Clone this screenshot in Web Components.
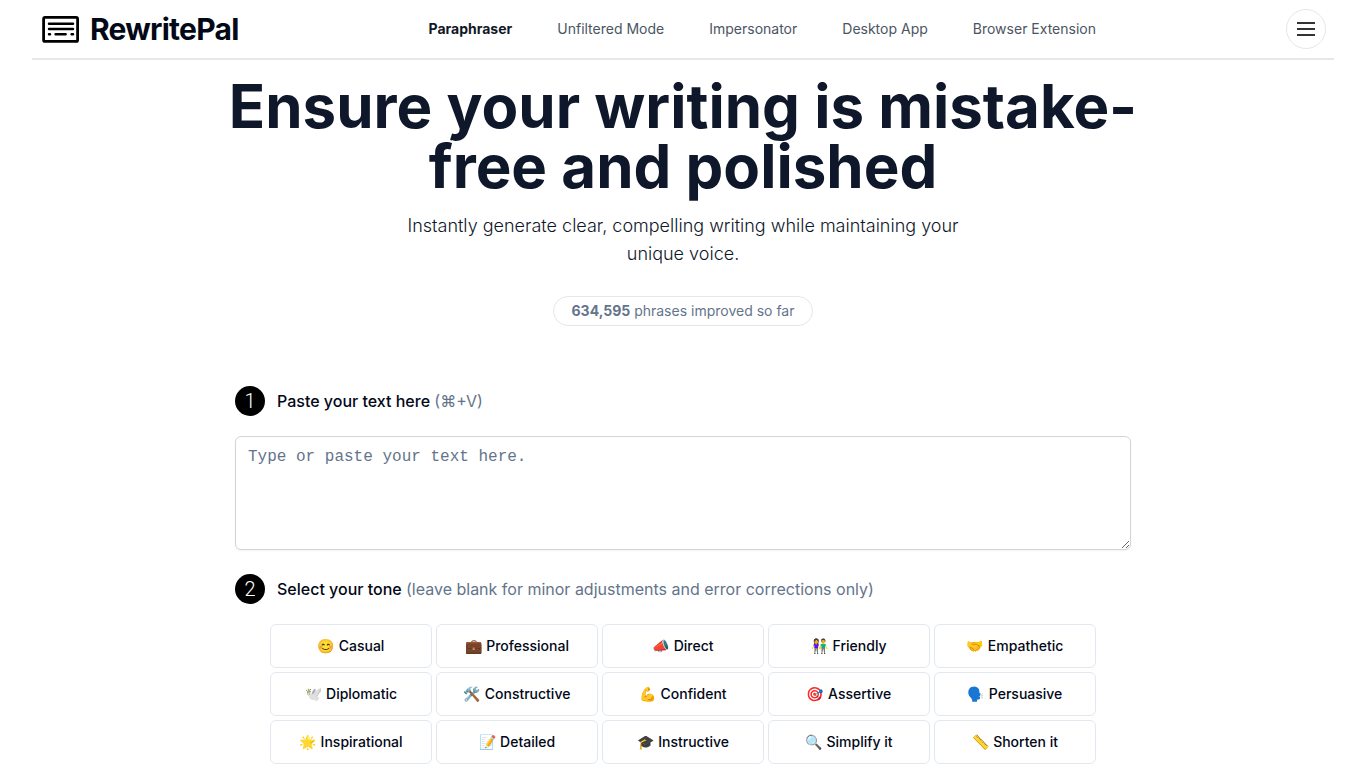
<!DOCTYPE html>
<html lang="en">
<head>
<meta charset="utf-8">
<meta name="viewport" content="width=device-width, initial-scale=1">
<title>RewritePal</title>
<style>
  body { margin: 0; background: #fff; color: #020817; font-family: Inter, "Noto Color Emoji", sans-serif; }
</style>
</head>
<body>
<rp-app></rp-app>
<script>
const define = (name, markup, setup) => {
  const template = document.createElement('template');
  template.innerHTML = markup;
  customElements.define(name, class extends HTMLElement {
    connectedCallback() {
      if (this.shadowRoot) return;
      this.attachShadow({ mode: 'open' }).append(template.content.cloneNode(true));
      if (setup) setup(this, this.shadowRoot);
    }
  });
};

define('rp-logo', `
  <style>
    :host { display: block; }
    a { display: flex; align-items: center; gap: 10px; color: inherit; text-decoration: none; font-size: 30px; line-height: 36px; font-weight: 700; letter-spacing: -0.025em; }
    svg { display: block; }
  </style>
  <a href="#">
    <svg width="40" height="30" viewBox="0 0 40 30" fill="none" stroke="#000" stroke-linecap="round" aria-hidden="true">
      <rect x="3.6" y="3.4" width="34" height="24" rx="1.5" stroke-width="2.8"/>
      <path d="M9 9.7h24M9 14.9h24M9 20.3h1M15.6 20.3h10M31.6 20.3h1.4" stroke-width="2.5"/>
    </svg>
    <span><slot></slot></span>
  </a>`);

define('rp-nav-link', `
  <style>
    :host { display: block; font-size: 14px; line-height: 20px; }
    a { color: #4b5563; text-decoration: none; }
    :host([current]) a { color: #111827; font-weight: 700; }
  </style>
  <a href="#"><slot></slot></a>`);

define('rp-menu-button', `
  <style>
    :host { display: block; }
    button { display: grid; place-items: center; width: 40px; height: 40px; padding: 0; border: 1px solid #e5e7eb; border-radius: 50%; background: #fff; color: #333; }
  </style>
  <button type="button" aria-label="Open menu">
    <svg width="24" height="24" viewBox="0 0 24 24" fill="none" stroke="currentColor" stroke-width="2" aria-hidden="true"><path d="M3 6h18M3 12h18M3 18h18"/></svg>
  </button>`);

define('rp-header', `
  <style>
    :host { display: block; margin: 0 32px; border-bottom: 2px solid #e5e7eb; }
    header { display: flex; align-items: center; justify-content: space-between; padding: 9px 8px; }
    nav { display: flex; gap: 45px; }
  </style>
  <header>
    <rp-logo>RewritePal</rp-logo>
    <nav aria-label="Main">
      <rp-nav-link current>Paraphraser</rp-nav-link>
      <rp-nav-link>Unfiltered Mode</rp-nav-link>
      <rp-nav-link>Impersonator</rp-nav-link>
      <rp-nav-link>Desktop App</rp-nav-link>
      <rp-nav-link>Browser Extension</rp-nav-link>
    </nav>
    <rp-menu-button></rp-menu-button>
  </header>`);

define('rp-hero', `
  <style>
    :host { display: flex; flex-direction: column; align-items: center; padding: 16px 32px 0; text-align: center; }
    h1 { max-width: 960px; margin: 0; font-size: 60px; line-height: 60px; font-weight: 700; color: #0f172a; }
    p { max-width: 576px; margin: 16px 0 28px; font-size: 18px; line-height: 28px; font-weight: 300; color: #0f172a; }
    .count { padding: 4px 18px; border: 1px solid #e5e7eb; border-radius: 15px; font-size: 14px; line-height: 20px; color: #64748b; }
  </style>
  <h1><slot name="title"></slot></h1>
  <p><slot name="summary"></slot></p>
  <div class="count"><slot name="count"></slot></div>`);

define('rp-step', `
  <style>
    :host { display: flex; align-items: center; gap: 12px; font-size: 16px; line-height: 24px; font-weight: 500; }
    .number { display: grid; place-items: center; width: 30px; height: 30px; border-radius: 50%; background: #000; color: #fff; font: 300 20px/30px Roboto, sans-serif; }
    .hint { color: #64748b; font-weight: 400; }
  </style>
  <span class="number"></span>
  <span><slot></slot> <span class="hint"><slot name="hint"></slot></span></span>`,
  (host, root) => { root.querySelector('.number').textContent = host.getAttribute('number'); });

define('rp-tone', `
  <style>
    :host { display: block; }
    button { display: block; box-sizing: border-box; width: 100%; height: 44px; padding: 0 12px; border: 1px solid #e2e8f0; border-radius: 6px; background: #fff; color: #020817; font: 500 14px/20px Inter, "Noto Color Emoji", sans-serif; white-space: nowrap; }
  </style>
  <button type="button" aria-pressed="false"><slot></slot></button>`);

define('rp-tone-grid', `
  <style>
    :host { display: grid; grid-template-columns: repeat(5, 1fr); gap: 4px; max-width: 826px; margin: 20px auto 0; }
  </style>`,
  (host, root) => {
    for (const label of ['😊 Casual', '💼 Professional', '📣 Direct', '👫 Friendly', '🤝 Empathetic',
      '🕊️ Diplomatic', '🛠️ Constructive', '💪 Confident', '🎯 Assertive', '🗣️ Persuasive',
      '🌟 Inspirational', '📝 Detailed', '🎓 Instructive', '🔍 Simplify it', '📏 Shorten it']) {
      const tone = document.createElement('rp-tone');
      tone.textContent = label;
      root.append(tone);
    }
  });

define('rp-form', `
  <style>
    :host { display: block; max-width: 896px; margin: 60px auto 0; padding: 0 32px 4px; }
    form { margin: 0; }
    label { display: block; }
    textarea { display: block; box-sizing: border-box; width: 100%; height: 114px; margin: 20px 0 24px; padding: 8px 12px; border: 1px solid #d1d5db; border-radius: 6px; background: #fff; box-shadow: 0 1px 2px rgb(0 0 0 / 5%); font: 16px/24px "Liberation Mono", monospace; color: #020817; resize: vertical; }
    textarea::placeholder { color: #64748b; opacity: 1; }
  </style>
  <form>
    <label for="text"><rp-step number="1">Paste your text here<span slot="hint">(⌘+V)</span></rp-step></label>
    <textarea id="text" placeholder="Type or paste your text here."></textarea>
    <rp-step number="2">Select your tone<span slot="hint">(leave blank for minor adjustments and error corrections only)</span></rp-step>
    <rp-tone-grid></rp-tone-grid>
  </form>`);

define('rp-app', `
  <style>
    :host { display: block; }
  </style>
  <rp-header></rp-header>
  <main>
    <rp-hero>
      <span slot="title">Ensure your writing is mistake-free and polished</span>
      <span slot="summary">Instantly generate clear, compelling writing while maintaining your unique voice.</span>
      <span slot="count"><strong>634,595</strong> phrases improved so far</span>
    </rp-hero>
    <rp-form></rp-form>
  </main>`);
</script>
</body>
</html>
